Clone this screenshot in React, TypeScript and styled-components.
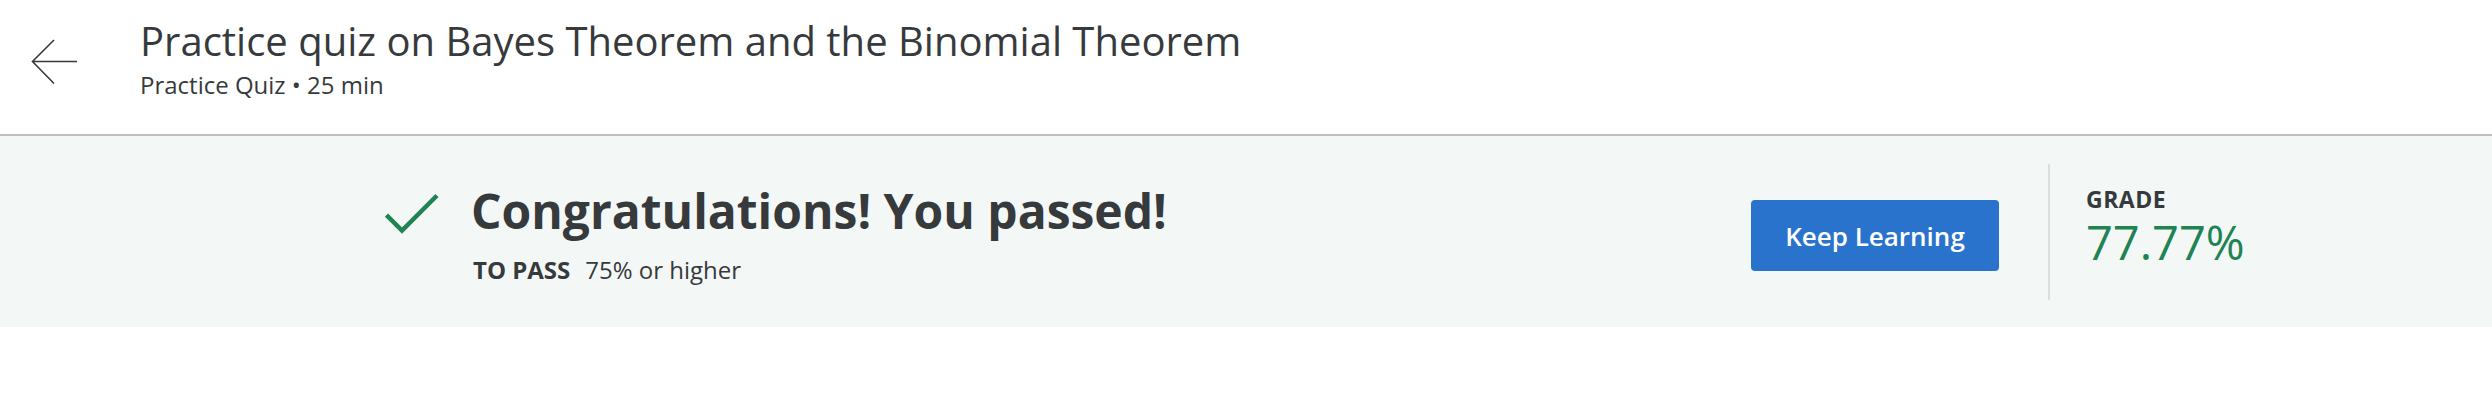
import styled, { createGlobalStyle } from 'styled-components'

const GlobalStyle = createGlobalStyle`
  body {
    margin: 0;
    background: #ffffff;
    font-family: "Open Sans", "Liberation Sans", sans-serif;
    color: #373a3c;
  }
`

const Header = styled.header`
  display: flex;
  align-items: flex-start;
  height: 134px;
  border-bottom: 2px solid #bdbdbd;
`

const BackButton = styled.button`
  display: flex;
  margin: 39px 0 0 31px;
  padding: 0;
  border: none;
  background: none;
  cursor: pointer;
`

const HeaderText = styled.div`
  display: flex;
  flex-direction: column;
  margin: 16px 0 0 62px;
`

const Title = styled.h1`
  margin: 0;
  font-size: 40px;
  font-weight: 400;
  line-height: 50px;
  color: #373a3c;
`

const Subtitle = styled.p`
  margin: 4px 0 0;
  font-size: 24px;
  line-height: 30px;
  color: #373a3c;
`

const Banner = styled.section`
  display: flex;
  align-items: center;
  height: 191px;
  padding: 0 206px 0 385px;
  background: #f3f8f6;
`

const Result = styled.div`
  flex: 1;
  display: flex;
  align-items: flex-start;
  gap: 32px;
  margin-top: 5px;
`

const CheckIcon = styled.svg`
  margin-top: 9px;
  flex-shrink: 0;
`

const ResultText = styled.div`
  display: flex;
  flex-direction: column;
`

const Headline = styled.h2`
  margin: 0;
  font-size: 48px;
  font-weight: 700;
  line-height: 54px;
  color: #373a3c;
`

const PassLine = styled.p`
  margin: 17px 0 0 2px;
  font-size: 24px;
  line-height: 30px;

  strong {
    font-weight: 700;
    margin-right: 15px;
  }
`

const PrimaryButton = styled.button`
  width: 248px;
  height: 71px;
  margin-top: 8px;
  border: none;
  border-radius: 4px;
  background: #2a73cc;
  color: #ffffff;
  font-family: "Open Sans", "Liberation Sans", sans-serif;
  font-size: 26px;
  font-weight: 600;
  cursor: pointer;
`

const Divider = styled.div`
  align-self: center;
  width: 2px;
  height: 136px;
  margin: 0 36px 0 49px;
  background: #dcdedd;
`

const Grade = styled.div`
  display: flex;
  flex-direction: column;
  gap: 3px;
  width: 200px;
  margin-bottom: 10px;
`

const GradeLabel = styled.span`
  font-size: 23px;
  font-weight: 700;
  line-height: 28px;
  letter-spacing: 0.5px;
`

const GradeValue = styled.span`
  font-size: 47px;
  line-height: 52px;
  color: #1f8354;
`

export default function App() {
  return (
    <>
      <GlobalStyle />
      <Header>
        <BackButton aria-label="Back">
          <svg width="47" height="47" viewBox="0 0 47 47" fill="none">
            <path d="M1.5 22.5H46M23 1L1.5 22.5L23 44.5" stroke="#373a3c" strokeWidth="1.6" />
          </svg>
        </BackButton>
        <HeaderText>
          <Title>Practice quiz on Bayes Theorem and the Binomial Theorem</Title>
          <Subtitle>Practice Quiz • 25 min</Subtitle>
        </HeaderText>
      </Header>
      <Banner>
        <Result>
          <CheckIcon width="54" height="42" viewBox="0 0 54 42" fill="none">
            <path d="M1.5 22L17 37.5L52 2.5" stroke="#1f8354" strokeWidth="4.5" />
          </CheckIcon>
          <ResultText>
            <Headline>Congratulations! You passed!</Headline>
            <PassLine>
              <strong>TO PASS</strong>75% or higher
            </PassLine>
          </ResultText>
        </Result>
        <PrimaryButton>Keep Learning</PrimaryButton>
        <Divider />
        <Grade>
          <GradeLabel>GRADE</GradeLabel>
          <GradeValue>77.77%</GradeValue>
        </Grade>
      </Banner>
    </>
  )
}
